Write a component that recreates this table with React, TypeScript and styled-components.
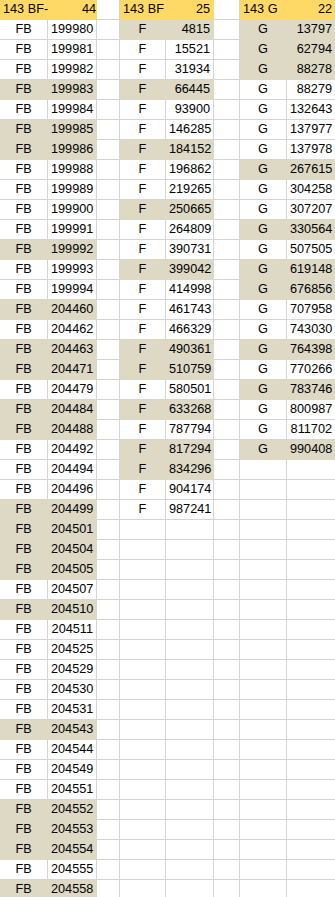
import React from 'react';
import styled, { createGlobalStyle } from 'styled-components';

const GRID = '#d4d4d4';
const TAN = '#ddd9c4';
const GOLD = '#ffd966';

const GlobalStyle = createGlobalStyle`
  html, body {
    margin: 0;
    padding: 0;
    background: #fff;
    overflow: hidden;
  }
`;

const Sheet = styled.div`
  display: grid;
  grid-template-columns: 48px 49px 23px 46px 48px 26px 47px 49px;
  grid-auto-rows: 20px;
  font-family: 'Liberation Sans', Arial, sans-serif;
  font-size: 12.7px;
  color: #000;
  width: 336px;
`;

type Align = 'left' | 'center' | 'right';

const Cell = styled.div<{ $fill?: string; $align?: Align; $tight?: boolean }>`
  box-sizing: border-box;
  height: 20px;
  line-height: 19px;
  padding: 0 ${p => (p.$tight ? '0' : '3px')};
  text-align: ${p => p.$align ?? 'left'};
  white-space: nowrap;
  background: ${p => p.$fill ?? '#fff'};
  border-right: 1px solid ${p => p.$fill ?? GRID};
  border-bottom: 1px solid ${p => p.$fill ?? GRID};
`;

// '*' marks a tan (highlighted) row
const FB = `199980 199981 199982 *199983 199984 *199985 *199986 199988 199989 199900 199991 *199992
199993 199994 *204460 204462 *204463 *204471 204479 *204484 *204488 204492 204494 204496 *204499
*204501 *204504 *204505 204507 *204510 204511 204525 204529 204530 204531 *204543 204544 204549
204551 *204552 *204553 *204554 204555 *204558`;

const F = `*4815 15521 31934 *66445 93900 146285 *184152 196862 219265 *250665 264809 390731 *399042
414998 461743 466329 *490361 *510759 580501 *633268 787794 *817294 *834296 904174 987241`;

const G = `*13797 *62794 *88278 88279 132643 137977 137978 *267615 304258 307207 *330564 507505
*619148 *676856 707958 743030 *764398 770266 *783746 800987 811702 *990408`;

interface Entry {
  value: string;
  marked: boolean;
}

const parse = (list: string): Entry[] =>
  list
    .split(/\s+/)
    .filter(Boolean)
    .map(v => ({ value: v.replace('*', ''), marked: v.startsWith('*') }));

const groups = [
  { code: 'FB', title: '143 BF-', count: '44', items: parse(FB) },
  { code: 'F', title: '143 BF', count: '25', items: parse(F) },
  { code: 'G', title: '143 G', count: '22', items: parse(G) },
];

const ROWS = 45;

const App: React.FC = () => {
  const cells: React.ReactNode[] = [];

  // header row
  groups.forEach((g, gi) => {
    cells.push(
      <Cell key={`h${gi}a`} $fill={GOLD}>{g.title}</Cell>,
      <Cell key={`h${gi}b`} $fill={GOLD} $align="right" $tight={gi === 0}>{g.count}</Cell>
    );
    if (gi < groups.length - 1) cells.push(<Cell key={`h${gi}s`} />);
  });

  for (let r = 0; r < ROWS; r++) {
    groups.forEach((g, gi) => {
      const item = g.items[r];
      const fill = item?.marked ? TAN : undefined;
      cells.push(
        <Cell key={`${r}-${gi}a`} $fill={fill} $align="center">{item ? g.code : ''}</Cell>,
        <Cell key={`${r}-${gi}b`} $fill={fill} $align="right">{item ? item.value : ''}</Cell>
      );
      if (gi < groups.length - 1) cells.push(<Cell key={`${r}-${gi}s`} />);
    });
  }

  return (
    <>
      <GlobalStyle />
      <Sheet>{cells}</Sheet>
    </>
  );
};

export default App;
